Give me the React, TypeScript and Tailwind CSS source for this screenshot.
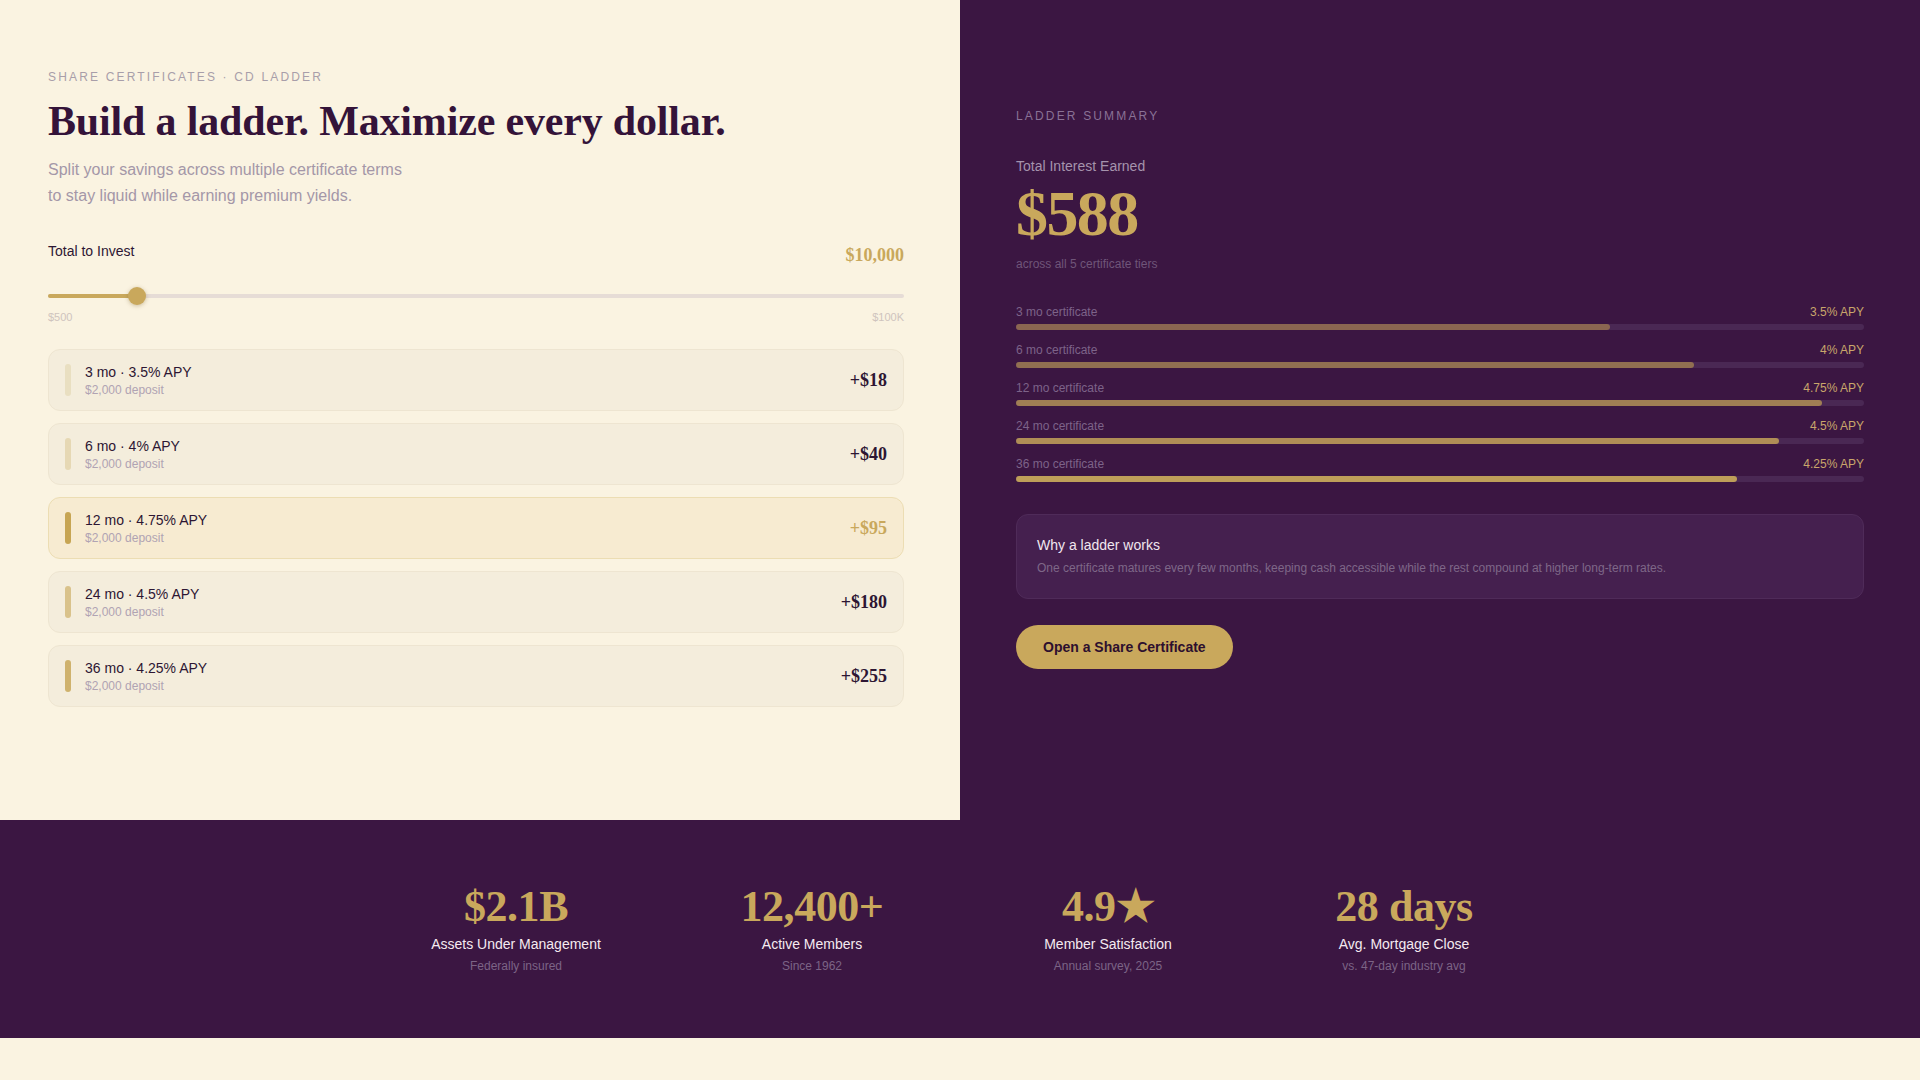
import { useState } from 'react';

const MIN = 500;
const MAX = 100000;

const TIERS = [
  { months: 3, apy: 3.5, accent: 'bg-[#E9DFC1]', fill: 'bg-[#8B6651]' },
  { months: 6, apy: 4, accent: 'bg-[#E6D8B4]', fill: 'bg-[#916F51]' },
  { months: 12, apy: 4.75, accent: 'bg-[#C7A553]', fill: 'bg-[#A07E54]' },
  { months: 24, apy: 4.5, accent: 'bg-[#D9C28B]', fill: 'bg-[#AF8E56]' },
  { months: 36, apy: 4.25, accent: 'bg-[#CFB26D]', fill: 'bg-[#BE9E59]' },
];

const STATS = [
  { value: '$2.1B', label: 'Assets Under Management', note: 'Federally insured' },
  { value: '12,400+', label: 'Active Members', note: 'Since 1962' },
  { value: '4.9★', label: 'Member Satisfaction', note: 'Annual survey, 2025' },
  { value: '28 days', label: 'Avg. Mortgage Close', note: 'vs. 47-day industry avg' },
];

const usd = (n: number) => '$' + Math.round(n).toLocaleString('en-US');

export default function App() {
  const [total, setTotal] = useState(10000);

  const deposit = total / TIERS.length;
  const rows = TIERS.map((t) => ({
    ...t,
    interest: Math.round(deposit * (t.apy / 100) * (t.months / 12)),
  }));
  const totalInterest = rows.reduce((s, r) => s + r.interest, 0);
  const bestApy = Math.max(...TIERS.map((t) => t.apy));
  const pct = (total - MIN) / (MAX - MIN);

  return (
    <div className="min-h-screen bg-[#FAF3E1] font-['Liberation_Sans',Arial,sans-serif]">
      <section className="grid grid-cols-2 min-h-[820px]">
        {/* Calculator */}
        <div className="pl-12 pr-14 pt-[67px] pb-16">
          <p className="text-xs leading-5 uppercase tracking-[0.18em] text-[#A89EA9]">
            Share Certificates · CD Ladder
          </p>
          <h1 className="mt-2 font-['Liberation_Serif','Times_New_Roman',serif] font-bold text-[42px] leading-tight tracking-[-0.004em] text-[#341339]">
            Build a ladder. Maximize every dollar.
          </h1>
          <p className="mt-[9px] text-base leading-relaxed text-[#A497A8]">
            Split your savings across multiple certificate terms
            <br />
            to stay liquid while earning premium yields.
          </p>

          <div className="mt-8 flex items-start justify-between">
            <span className="text-sm leading-5 text-[#2D1633]">Total to Invest</span>
            <span className="font-['Liberation_Serif','Times_New_Roman',serif] font-bold text-lg text-[#C9A85C]">
              {usd(total)}
            </span>
          </div>

          <div className="relative mt-[18px] h-[18px]">
            <div className="absolute inset-x-0 top-[7px] h-1 rounded-full bg-[#E6DCD6]" />
            <div
              className="absolute left-0 top-[7px] h-1 rounded-full bg-[#C9A85C]"
              style={{ width: `calc(9px + (100% - 18px) * ${pct})` }}
            />
            <div
              className="absolute top-0 h-[18px] w-[18px] rounded-full bg-[#C9A85C] shadow-[0_1px_4px_rgba(120,90,30,0.35)]"
              style={{ left: `calc((100% - 18px) * ${pct})` }}
            />
            <input
              type="range"
              min={MIN}
              max={MAX}
              step={500}
              value={total}
              onChange={(e) => setTotal(Number(e.target.value))}
              className="absolute inset-0 w-full h-full opacity-0 cursor-pointer"
            />
          </div>
          <div className="mt-1 flex justify-between text-[11px] text-[#CFC4BE]">
            <span>$500</span>
            <span>$100K</span>
          </div>

          <div className="mt-6 space-y-3">
            {rows.map((r) => {
              const best = r.apy === bestApy;
              return (
                <div
                  key={r.months}
                  className={`flex items-center justify-between rounded-xl border px-4 py-3 ${
                    best ? 'bg-[#F7EBD1] border-[#ECDDB3]' : 'bg-[#F4EDDC] border-[#EEE5D1]'
                  }`}
                >
                  <div className="flex items-center gap-3.5">
                    <div className={`w-1.5 h-8 rounded-full ${r.accent}`} />
                    <div>
                      <div className="text-sm leading-5 text-[#2D1633]">
                        {r.months} mo · {r.apy}% APY
                      </div>
                      <div className="text-xs leading-4 text-[#B0A3B3]">{usd(deposit)} deposit</div>
                    </div>
                  </div>
                  <span
                    className={`font-['Liberation_Serif','Times_New_Roman',serif] font-bold text-lg ${
                      best ? 'text-[#C9A85C]' : 'text-[#2D1633]'
                    }`}
                  >
                    +{usd(r.interest)}
                  </span>
                </div>
              );
            })}
          </div>
        </div>

        {/* Summary */}
        <div className="bg-[#3B1642] pl-14 pr-14 pt-[108px] pb-16">
          <p className="text-xs leading-4 uppercase tracking-[0.18em] text-[#8A7296]">Ladder Summary</p>
          <p className="mt-8 text-sm leading-5 text-[#A593AD]">Total Interest Earned</p>
          <div className="mt-1.5 font-['Liberation_Serif','Times_New_Roman',serif] font-bold text-[64px] leading-none tracking-tight text-[#C9A85C]">
            {usd(totalInterest)}
          </div>
          <p className="mt-[10px] text-xs leading-4 text-[#6F5579]">across all {TIERS.length} certificate tiers</p>

          <div className="mt-8 space-y-3">
            {rows.map((r) => (
              <div key={r.months}>
                <div className="flex justify-between text-xs leading-4">
                  <span className="text-[#7D6389]">{r.months} mo certificate</span>
                  <span className="text-[#C9A66B]">{r.apy}% APY</span>
                </div>
                <div className="mt-1 h-1.5 rounded-full bg-[#4A2854]">
                  <div className={`h-full rounded-full ${r.fill}`} style={{ width: `${(r.apy / 5) * 100}%` }} />
                </div>
              </div>
            ))}
          </div>

          <div className="mt-8 rounded-xl border border-[#4F2B59] bg-[#45204F] px-5 py-5">
            <p className="text-sm leading-5 text-[#F1E6EE]">Why a ladder works</p>
            <p className="mt-1 text-xs leading-[19px] text-[#7E6788]">
              One certificate matures every few months, keeping cash accessible while the rest compound at higher
              long-term rates.
            </p>
          </div>

          <button className="mt-[26px] h-11 rounded-full bg-[#C9A85C] px-[27px] text-sm font-bold text-[#2D0F2E]">
            Open a Share Certificate
          </button>
        </div>
      </section>

      {/* Stats */}
      <section className="bg-[#3B1642] pt-[65px] pb-16">
        <div className="mx-auto grid max-w-6xl grid-cols-4 gap-8 text-center">
          {STATS.map((s) => (
            <div key={s.label}>
              <div className="font-['Liberation_Serif','Times_New_Roman',serif] font-bold text-[44px] leading-none tracking-[-0.01em] text-[#C9A85C]">
                {s.value}
              </div>
              <div className="mt-[5px] text-sm leading-5 text-[#F5EAF0]">{s.label}</div>
              <div className="mt-1 text-xs leading-4 text-[#7C6486]">{s.note}</div>
            </div>
          ))}
        </div>
      </section>
    </div>
  );
}
